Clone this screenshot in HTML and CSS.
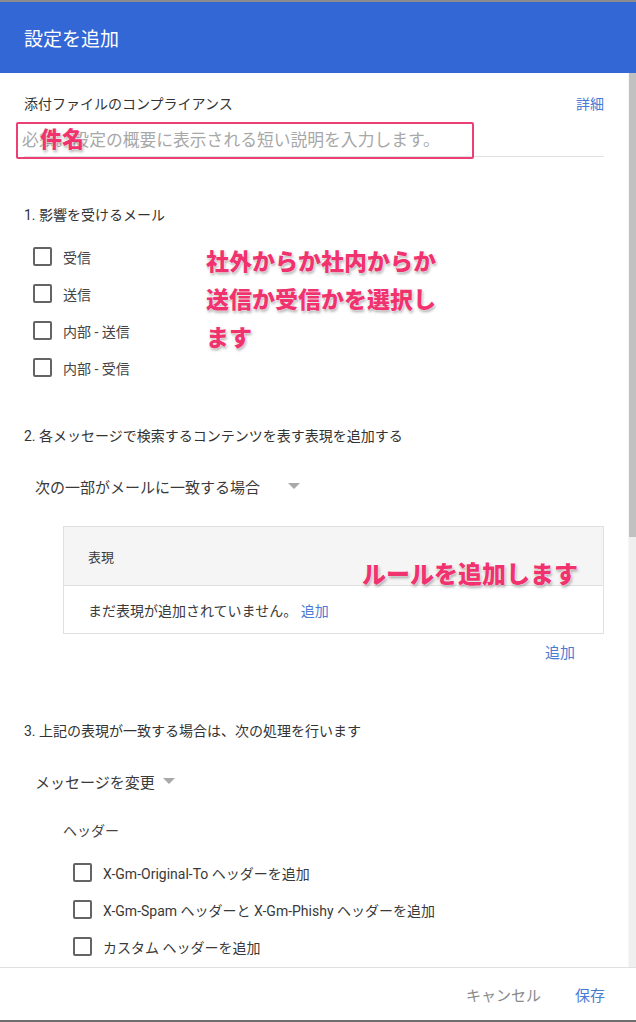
FILE: index.html
```html
<!DOCTYPE html>
<html lang="ja">
<head>
<meta charset="utf-8">
<title>設定を追加</title>
<link rel="stylesheet" href="styles.css">
</head>
<body>
<div class="dialog">
  <header class="dlg-header">設定を追加</header>
  <main class="dlg-body">
    <div class="content">
      <div class="title-row">
        <span class="setting-name">添付ファイルのコンプライアンス</span>
        <a class="link">詳細</a>
      </div>
      <div class="field"><span class="placeholder">必須。設定の概要に表示される短い説明を入力します。</span></div>

      <div class="step step-1">1. 影響を受けるメール</div>
      <ul class="checks">
        <li class="check"><input type="checkbox" class="cb"><span>受信</span></li>
        <li class="check"><input type="checkbox" class="cb"><span>送信</span></li>
        <li class="check"><input type="checkbox" class="cb"><span>内部 - 送信</span></li>
        <li class="check"><input type="checkbox" class="cb"><span>内部 - 受信</span></li>
      </ul>

      <div class="step step-2">2. 各メッセージで検索するコンテンツを表す表現を追加する</div>
      <div class="select select-wide"><span>次の一部がメールに一致する場合</span><i class="caret"></i></div>
      <div class="expr-table">
        <div class="expr-head">表現</div>
        <div class="expr-body">まだ表現が追加されていません。 <a class="link">追加</a></div>
      </div>
      <div class="add-row"><a class="link">追加</a></div>

      <div class="step step-3">3. 上記の表現が一致する場合は、次の処理を行います</div>
      <div class="select"><span>メッセージを変更</span><i class="caret"></i></div>
      <div class="subhead">ヘッダー</div>
      <ul class="checks checks-sub">
        <li class="check"><input type="checkbox" class="cb"><span>X-Gm-Original-To ヘッダーを追加</span></li>
        <li class="check"><input type="checkbox" class="cb"><span>X-Gm-Spam ヘッダーと X-Gm-Phishy ヘッダーを追加</span></li>
        <li class="check"><input type="checkbox" class="cb"><span>カスタム ヘッダーを追加</span></li>
      </ul>

      <div class="note note-name"><span class="note-text">件名</span></div>
      <div class="note note-mail">社外からか社内からか<br>送信か受信かを選択し<br>ます</div>
      <div class="note note-rule">ルールを追加します</div>
    </div>
    <div class="scroll-track"><div class="scroll-thumb"></div></div>
  </main>
  <footer class="dlg-footer">
    <a class="btn btn-cancel">キャンセル</a>
    <a class="btn btn-save">保存</a>
  </footer>
</div>
</body>
</html>
```

FILE: styles.css
```css
html, body {
  margin: 0;
  padding: 0;
  background: #fff;
}

body {
  font-family: Roboto, "Noto Sans CJK JP", sans-serif;
  color: #333;
}

.dialog {
  height: 1022px;
  box-sizing: border-box;
  display: flex;
  flex-direction: column;
  border-top: 2px solid #8d8d8d;
  border-bottom: 2px solid #6e6e6e;
}

.dlg-header {
  flex: 0 0 71px;
  background: #3367d6;
  color: #fff;
  font-size: 19px;
  display: flex;
  align-items: center;
  padding-left: 24px;
  padding-bottom: 1px;
  box-sizing: border-box;
}

.dlg-body {
  flex: 1 1 auto;
  display: flex;
  min-height: 0;
}

.content {
  position: relative;
  flex: 1 1 auto;
  overflow: hidden;
  padding: 21px 24px 0 24px;
  font-size: 14px;
}

.scroll-track {
  flex: 0 0 7px;
  background: #efefef;
  border-left: 1px solid #f6f6f6;
}

.scroll-thumb {
  height: 464px;
  background: #c1c1c1;
}

.link {
  color: #4a7bd2;
  text-decoration: none;
  cursor: pointer;
}

.title-row {
  display: flex;
  justify-content: space-between;
  line-height: 20px;
  height: 20px;
}

.field {
  margin-top: 14px;
  line-height: 24px;
  padding-bottom: 4px;
  border-bottom: 1px solid #e2e2e2;
  font-size: 16.8px;
}

.placeholder {
  color: #a8a8a8;
  margin-left: -2px;
}

.step {
  line-height: 20px;
  height: 20px;
}
.step-1 { margin-top: 48px; }
.step-2 { margin-top: 40px; }
.step-3 { margin-top: 58px; }

.checks {
  list-style: none;
  margin: 13px 0 0 0;
  padding: 0 0 0 9px;
}

.check {
  height: 37px;
  display: flex;
  align-items: center;
  gap: 11px;
  color: #444;
}

.cb {
  appearance: none;
  -webkit-appearance: none;
  margin: 0;
  width: 19px;
  height: 19px;
  box-sizing: border-box;
  border: 2px solid #646464;
  border-radius: 2px;
  background: #fff;
  flex: 0 0 auto;
}

.select {
  margin: 31px 0 0 11px;
  display: flex;
  align-items: center;
  line-height: 22px;
  height: 22px;
  font-size: 15px;
  color: #3a3a3a;
  gap: 8px;
}

.select-wide span {
  min-width: 245px;
}

.caret {
  width: 0;
  height: 0;
  border-left: 6px solid transparent;
  border-right: 6px solid transparent;
  border-top: 6px solid #a9a9a9;
  margin-top: -4px;
}

.expr-table {
  margin: 27px 0 0 39px;
  border: 1px solid #e0e0e0;
}

.expr-head {
  height: 58px;
  background: #f5f5f5;
  border-bottom: 1px solid #e0e0e0;
  display: flex;
  align-items: center;
  padding-left: 24px;
  font-size: 13px;
  color: #3a3a3a;
}

.expr-body {
  height: 47px;
  display: flex;
  align-items: center;
  padding-left: 24px;
  color: #3a3a3a;
  white-space: pre;
}

.add-row {
  margin-top: 9px;
  display: flex;
  justify-content: flex-end;
  padding-right: 29px;
  line-height: 20px;
  font-size: 15px;
}

.subhead {
  margin: 27px 0 0 39px;
  line-height: 20px;
  height: 20px;
  color: #444;
}

.checks-sub {
  margin-top: 13px;
  padding-left: 49px;
}

.checks-sub .check {
  color: #3a3a3a;
}

/* annotations overlaid on the screenshot */
.note {
  position: absolute;
  font-family: "Noto Sans CJK JP", sans-serif;
  font-weight: 900;
  color: #f0326e;
  text-shadow: 0 0 1px #fff, 0 0 2px #fff, 1px 2px 3px rgba(0, 0, 0, 0.35);
}

.note-name {
  left: 16px;
  top: 49px;
  width: 458px;
  height: 37px;
  box-sizing: border-box;
  border: 2px solid #ec3f74;
  border-radius: 2px;
  text-shadow: none;
}

.note-text {
  position: absolute;
  left: 22px;
  top: 0;
  font-size: 22px;
  line-height: 26px;
  text-shadow: 0 0 1px #fff, 0 0 2px #fff, 1px 2px 3px rgba(0, 0, 0, 0.35);
}

.note-mail {
  left: 206px;
  top: 168px;
  font-size: 23px;
  line-height: 38px;
}

.note-rule {
  left: 362px;
  top: 485px;
  font-size: 24px;
  line-height: 30px;
}

.dlg-footer {
  flex: 0 0 52px;
  border-top: 1px solid #e0e0e0;
  display: flex;
  justify-content: flex-end;
  align-items: center;
  gap: 34px;
  padding-right: 31px;
  font-size: 15px;
}

.btn {
  cursor: pointer;
}
.btn-cancel { color: #8a8a8a; }
.btn-save { color: #4a7bd2; }
```
